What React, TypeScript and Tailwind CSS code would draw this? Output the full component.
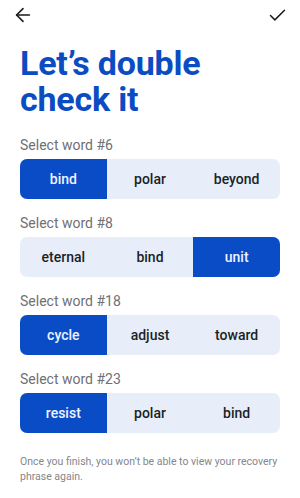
import React from "react";

const rows: { label: string; words: string[]; sel: number }[] = [
  { label: "Select word #6", words: ["bind", "polar", "beyond"], sel: 0 },
  { label: "Select word #8", words: ["eternal", "bind", "unit"], sel: 2 },
  { label: "Select word #18", words: ["cycle", "adjust", "toward"], sel: 0 },
  { label: "Select word #23", words: ["resist", "polar", "bind"], sel: 0 },
];

export default function App() {
  return (
    <div
      className="w-[300px] h-[498px] bg-white overflow-hidden"
      style={{ fontFamily: "Roboto, 'Noto Sans', sans-serif" }}
    >
      <div className="h-[30px] flex items-center justify-between px-[12px]">
        <svg width="22" height="22" viewBox="0 0 24 24" fill="none" stroke="#1a1a1a" strokeWidth="1.7" strokeLinecap="round" strokeLinejoin="round">
          <path d="M19 12H5" />
          <path d="M12 19l-7-7 7-7" />
        </svg>
        <svg width="21" height="21" viewBox="0 0 24 24" fill="none" stroke="#1a1a1a" strokeWidth="1.7" strokeLinecap="round" strokeLinejoin="round">
          <path d="M20 6 9 17l-5-5" />
        </svg>
      </div>
      <div className="px-5">
        <h1 className="mt-[15px] text-[34px] leading-[36px] font-bold text-[#0c4cc2] tracking-[-0.2px]">
          Let’s double
          <br />
          check it
        </h1>
        <div className="mt-[18px] flex flex-col gap-[14px]">
          {rows.map((r) => (
            <div key={r.label}>
              <div className="text-[14px] leading-[20px] text-[#6f6f74] mb-[4px]">{r.label}</div>
              <div className="grid grid-cols-3 h-[40px] rounded-[7px] overflow-hidden bg-[#e8eef9]">
                {r.words.map((w, i) => (
                  <div
                    key={w + i}
                    className={
                      i === r.sel
                        ? "flex items-center justify-center bg-[#0a4cc6] text-[#eef3ff] text-[14px] font-medium"
                        : "flex items-center justify-center text-[#1c1f28] text-[14px] font-medium"
                    }
                  >
                    {w}
                  </div>
                ))}
              </div>
            </div>
          ))}
        </div>
        <p className="mt-[21px] -mr-2 text-[10.5px] leading-[15px] text-[#85868b]">
          Once you finish, you won’t be able to view your recovery phrase again.
        </p>
      </div>
    </div>
  );
}
